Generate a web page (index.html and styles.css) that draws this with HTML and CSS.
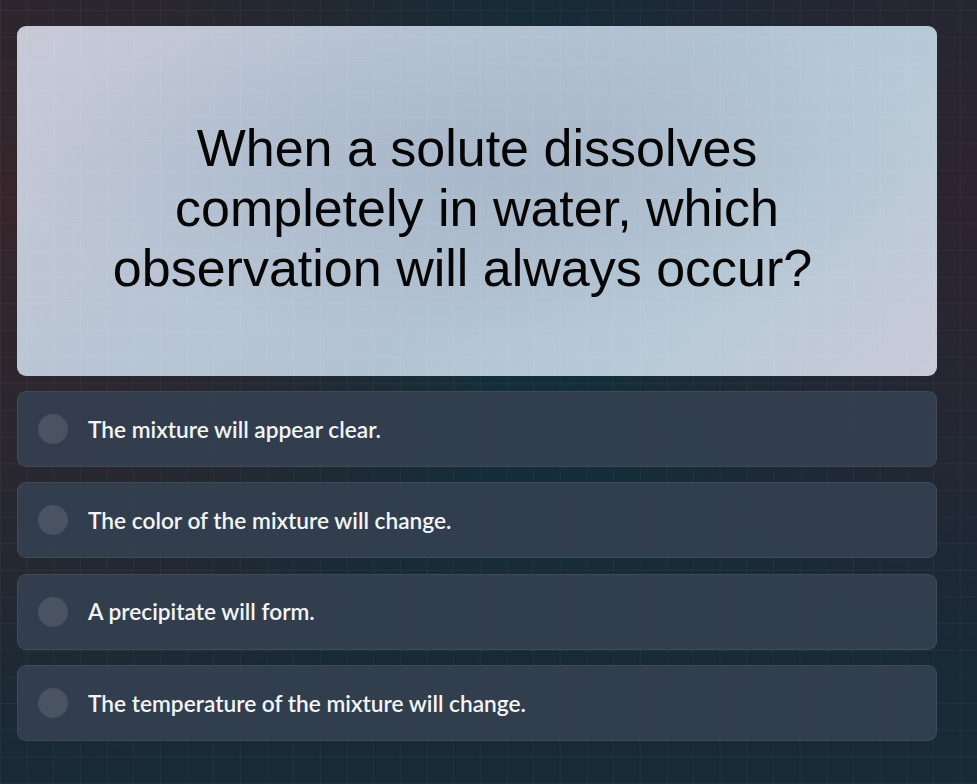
FILE: index.html
```html
<!DOCTYPE html>
<html lang="en">
<head>
<meta charset="UTF-8">
<meta name="viewport" content="width=device-width, initial-scale=1.0">
<title>Quiz Question</title>
<link rel="stylesheet" href="styles.css">
</head>
<body>

<div class="quiz">
    <div class="question">
        <h1>When a solute dissolves completely in water, which observation will always occur?&nbsp;&nbsp;</h1>
    </div>
    <div class="answers">
        <div class="answer"><span class="radio"></span><span class="label">The mixture will appear clear.</span></div>
        <div class="answer"><span class="radio"></span><span class="label">The color of the mixture will change.</span></div>
        <div class="answer"><span class="radio"></span><span class="label">A precipitate will form.</span></div>
        <div class="answer"><span class="radio"></span><span class="label">The temperature of the mixture will change.</span></div>
    </div>
</div>

</body>
</html>
```
FILE: styles.css
```css
html, body {
    height: 100%;
}
body {
    margin: 0;
    font-family: "Lato", "Liberation Sans", sans-serif;
    background-color: #182a36;
    background-image:
        linear-gradient(rgba(255, 255, 255, 0.035) 1px, transparent 1px),
        linear-gradient(90deg, rgba(255, 255, 255, 0.035) 1px, transparent 1px),
        radial-gradient(ellipse 55% 75% at 0% 25%, #36252b 0%, rgba(54, 37, 43, 0.6) 45%, rgba(54, 37, 43, 0) 100%),
        radial-gradient(ellipse 45% 60% at 100% 25%, #2d2430 0%, rgba(45, 36, 48, 0.6) 45%, rgba(45, 36, 48, 0) 100%),
        radial-gradient(ellipse 50% 45% at 55% 40%, #12303a 0%, rgba(18, 48, 58, 0) 100%);
    background-size: 26.67px 26.67px, 26.67px 26.67px, 100% 100%, 100% 100%, 100% 100%;
    background-position: 0 10px, 0 10px, 0 0, 0 0, 0 0;
    background-attachment: fixed;
}
.quiz {
    width: 920px;
    padding: 26px 17px;
}
.question {
    height: 350px;
    box-sizing: border-box;
    padding: 14px 95px 0;
    border-radius: 9px;
    display: flex;
    align-items: center;
    justify-content: center;
    background-image:
        linear-gradient(rgba(255, 255, 255, 0.06) 1px, transparent 1px),
        linear-gradient(90deg, rgba(255, 255, 255, 0.06) 1px, transparent 1px),
        radial-gradient(ellipse 50% 50% at 50% 40%, rgba(165, 180, 199, 0.8) 0%, rgba(165, 180, 199, 0) 100%),
        linear-gradient(135deg, #c8c9d7 0%, #b9c5d4 30%, #b2c3d2 55%, #b8cad7 75%, #c8cad8 100%);
    background-size: 26.67px 26.67px, 26.67px 26.67px, 100% 100%, 100% 100%;
    background-position: 0 10px, 0 10px, 0 0, 0 0;
    background-attachment: fixed, fixed, scroll, scroll;
}
.question h1 {
    margin: 0;
    font-family: "Liberation Sans", Arial, sans-serif;
    font-weight: normal;
    font-size: 52px;
    line-height: 60px;
    color: #050505;
    text-align: center;
}
.answers {
    display: flex;
    flex-direction: column;
    gap: 15.4px;
    margin-top: 15px;
}
.answer {
    display: flex;
    align-items: center;
    height: 76px;
    box-sizing: border-box;
    padding: 0 20px;
    border: 1px solid rgba(255, 255, 255, 0.07);
    border-radius: 9px;
    background-color: rgba(52, 63, 80, 0.93);
}
.radio {
    width: 30px;
    height: 30px;
    border-radius: 50%;
    background-color: #4a5362;
    flex-shrink: 0;
}
.label {
    margin-left: 20px;
    font-size: 22.7px;
    font-weight: 600;
    color: #f4f5f7;
}
```
